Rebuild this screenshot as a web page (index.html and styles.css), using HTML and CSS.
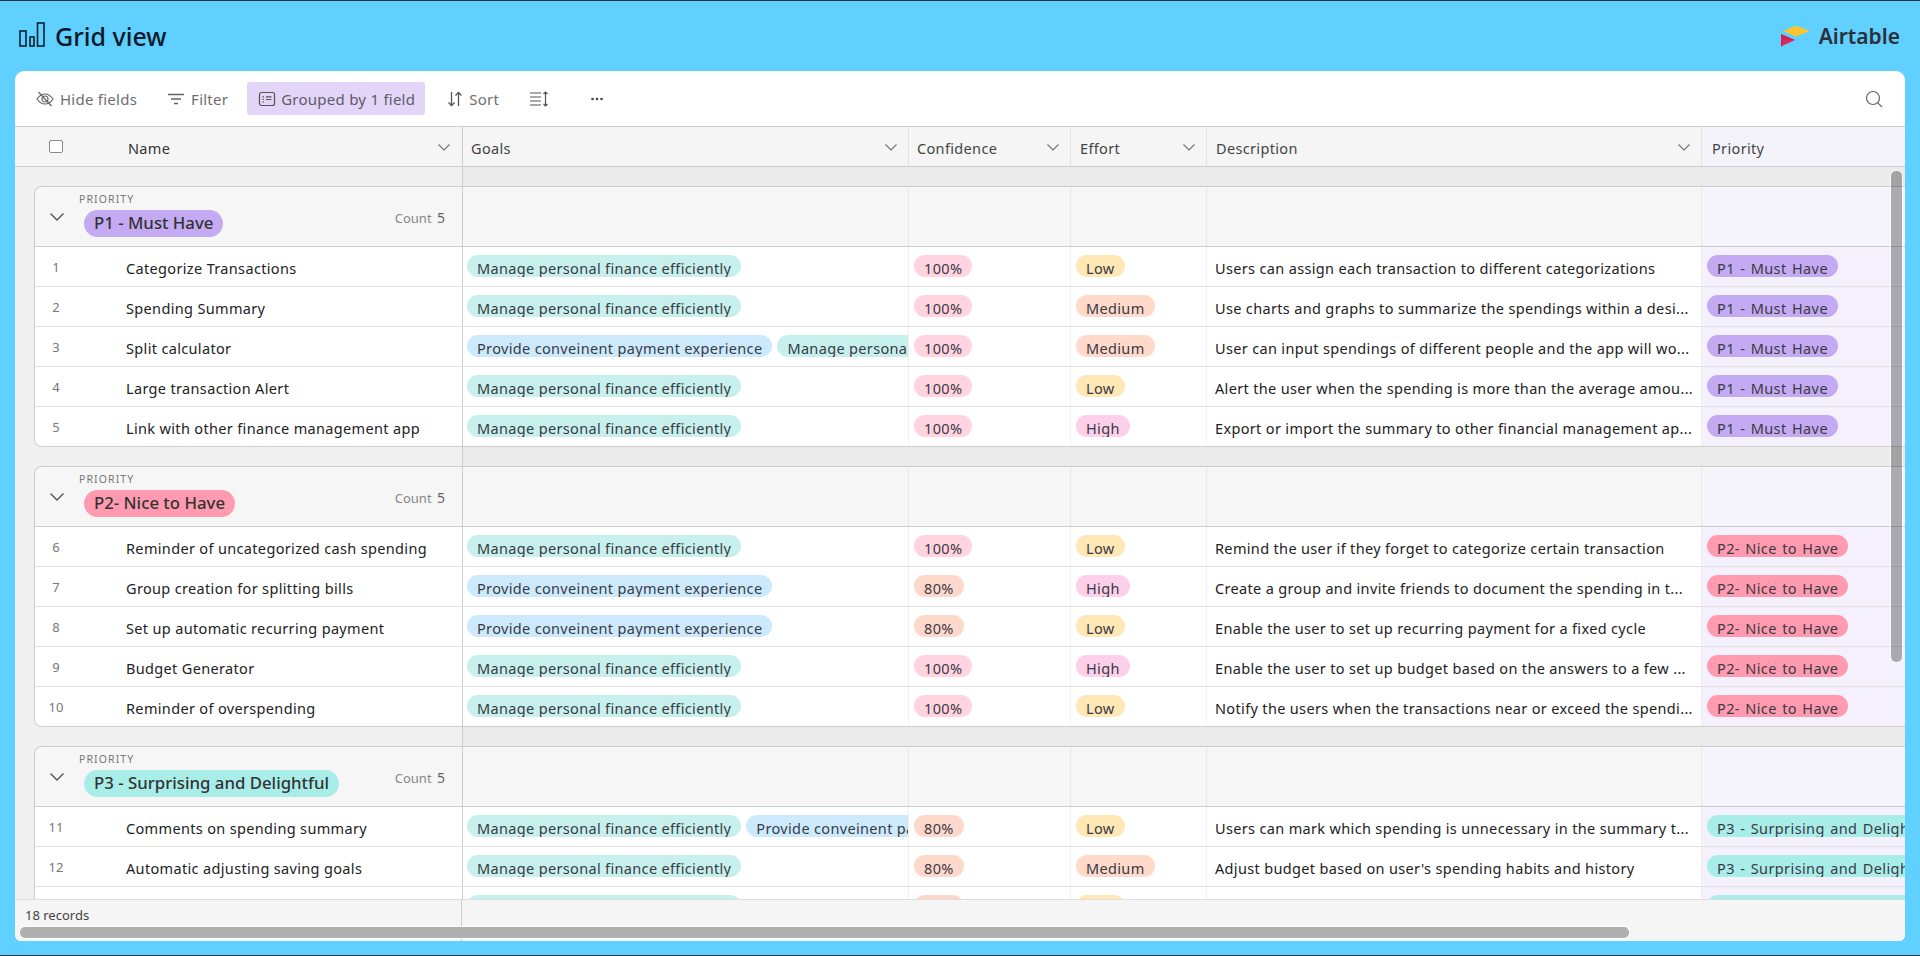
FILE: index.html
```html
<!DOCTYPE html>
<html lang="en">
<head>
<meta charset="utf-8">
<title>Grid view</title>
<link rel="stylesheet" href="styles.css">
</head>
<body>
<div class="app">
  <header class="titlebar">
    <svg class="chart-icon" width="26" height="26" viewBox="0 0 26 26" fill="none" stroke="#0b2233" stroke-width="1.6"><rect x="1" y="9" width="6" height="15"/><rect x="11" y="15" width="4" height="9"/><rect x="18.500" y="1" width="6.500" height="23"/></svg>
    <h1 class="title">Grid view</h1>
    <div class="brand">
      <svg width="30" height="21" viewBox="0 0 30 21"><path d="M2 5 13.500.3q1.500-.5 3 0L29 5 16.500 10q-1.500.5-3 0Z" fill="#fcc52f"/><path d="M0 8 14 14 0 20.500Z" fill="#e0245e"/><path d="M0 8 14 14 2.500 13.500 0 20.500Z" fill="#c01e50" opacity=".5"/></svg>
      <span class="brand-name">Airtable</span>
    </div>
  </header>
  <main class="card">
    <div class="toolbar">
      <span class="tool tool-hide"><svg width="18" height="18" viewBox="0 0 18 18" fill="none" stroke="#666" stroke-width="1.200"><path d="M1 9q3.500-5 8-5t8 5q-3.500 5-8 5t-8-5Z"/><circle cx="9" cy="9" r="3"/><path d="M2.500 2 15.500 16"/></svg>Hide fields</span>
      <span class="tool tool-filter"><svg width="18" height="18" viewBox="0 0 18 18" fill="none" stroke="#666" stroke-width="1.300"><path d="M1 4.500h16M4 9h10M7 13.500h4"/></svg>Filter</span>
      <span class="tool tool-group"><svg width="18" height="18" viewBox="0 0 18 18" fill="none" stroke="#555" stroke-width="1.200"><rect x="1.500" y="2.500" width="15" height="13" rx="2"/><path d="M4.500 6.800h1.500M8 6.800h5.500M4.500 9.500h1.500M8 9.500h5.500M4.500 12h1.500"/></svg>Grouped by 1 field</span>
      <span class="tool tool-sort"><svg width="16" height="18" viewBox="0 0 16 18" fill="none" stroke="#555" stroke-width="1.300"><path d="M4.500 2v13.500M1.500 12.500l3 3 3-3M11.500 16V2.500M8.500 5.500l3-3 3 3"/></svg>Sort</span>
      <span class="tool tool-rows"><svg width="20" height="18" viewBox="0 0 20 18" fill="none" stroke="#555" stroke-width="1.200"><path d="M1 3h11M1 7h11M1 11h11M1 15h11M16.500 2v14M14.500 4l2-2 2 2M14.500 14l2 2 2-2"/></svg></span>
      <span class="tool tool-more"><svg width="14" height="14" viewBox="0 0 14 14" fill="#444"><circle cx="2.500" cy="7" r="1.300"/><circle cx="7" cy="7" r="1.300"/><circle cx="11.500" cy="7" r="1.300"/></svg></span>
      <svg class="search" width="18" height="18" viewBox="0 0 18 18" fill="none" stroke="#666" stroke-width="1.200"><circle cx="8" cy="8" r="6.500"/><path d="M12.800 12.800 17 17"/></svg>
    </div>

    <div class="head row-head">
      <div class="hcell hcell-name"><span class="check"></span><span class="hname">Name</span><svg class="chev" width="12" height="7" viewBox="0 0 12 7" fill="none" stroke="#777" stroke-width="1.200"><path d="M.5.500 6 6 11.500.500"/></svg></div>
      <div class="hcell">Goals<svg class="chev" width="12" height="7" viewBox="0 0 12 7" fill="none" stroke="#777" stroke-width="1.200"><path d="M.5.500 6 6 11.500.500"/></svg></div>
      <div class="hcell">Confidence<svg class="chev" width="12" height="7" viewBox="0 0 12 7" fill="none" stroke="#777" stroke-width="1.200"><path d="M.5.500 6 6 11.500.500"/></svg></div>
      <div class="hcell hcell-effort">Effort<svg class="chev" width="12" height="7" viewBox="0 0 12 7" fill="none" stroke="#777" stroke-width="1.200"><path d="M.5.500 6 6 11.500.500"/></svg></div>
      <div class="hcell hcell-effort">Description<svg class="chev" width="12" height="7" viewBox="0 0 12 7" fill="none" stroke="#777" stroke-width="1.200"><path d="M.5.500 6 6 11.500.500"/></svg></div>
      <div class="hcell hcell-pri">Priority</div>
    </div>

    <div class="viewport">
      <div class="gap"><i></i><b></b></div>

      <section class="group">
        <div class="row ghead">
          <div class="gcell"><svg class="gchev" width="14" height="8" viewBox="0 0 14 8" fill="none" stroke="#555" stroke-width="1.400"><path d="M.5.500 7 7 13.500.500"/></svg><div class="gtitle"><span class="glabel">PRIORITY</span><span class="gpill p1">P1 - Must Have</span></div><span class="count">Count <em>5</em></span></div>
          <div></div><div></div><div></div><div></div><div class="pri-head"></div>
        </div>
        <div class="row"><div class="c-name"><span class="num">1</span>Categorize Transactions</div><div class="c-goal"><span class="pill gm">Manage personal finance efficiently</span></div><div class="c-tag"><span class="pill c100">100%</span></div><div class="c-tag"><span class="pill low">Low</span></div><div class="c-desc">Users can assign each transaction to different categorizations</div><div class="c-tag pri"><span class="pill p1">P1 - Must Have</span></div></div>
        <div class="row"><div class="c-name"><span class="num">2</span>Spending Summary</div><div class="c-goal"><span class="pill gm">Manage personal finance efficiently</span></div><div class="c-tag"><span class="pill c100">100%</span></div><div class="c-tag"><span class="pill med">Medium</span></div><div class="c-desc">Use charts and graphs to summarize the spendings within a desi...</div><div class="c-tag pri"><span class="pill p1">P1 - Must Have</span></div></div>
        <div class="row"><div class="c-name"><span class="num">3</span>Split calculator</div><div class="c-goal"><span class="pill gp">Provide conveinent payment experience</span><span class="pill gm">Manage personal finance efficiently</span></div><div class="c-tag"><span class="pill c100">100%</span></div><div class="c-tag"><span class="pill med">Medium</span></div><div class="c-desc">User can input spendings of different people and the app will wo...</div><div class="c-tag pri"><span class="pill p1">P1 - Must Have</span></div></div>
        <div class="row"><div class="c-name"><span class="num">4</span>Large transaction Alert</div><div class="c-goal"><span class="pill gm">Manage personal finance efficiently</span></div><div class="c-tag"><span class="pill c100">100%</span></div><div class="c-tag"><span class="pill low">Low</span></div><div class="c-desc">Alert the user when the spending is more than the average amou...</div><div class="c-tag pri"><span class="pill p1">P1 - Must Have</span></div></div>
        <div class="row"><div class="c-name"><span class="num">5</span>Link with other finance management app</div><div class="c-goal"><span class="pill gm">Manage personal finance efficiently</span></div><div class="c-tag"><span class="pill c100">100%</span></div><div class="c-tag"><span class="pill high">High</span></div><div class="c-desc">Export or import the summary to other financial management ap...</div><div class="c-tag pri"><span class="pill p1">P1 - Must Have</span></div></div>
      </section>

      <div class="gap"><i></i><b></b></div>

      <section class="group">
        <div class="row ghead">
          <div class="gcell"><svg class="gchev" width="14" height="8" viewBox="0 0 14 8" fill="none" stroke="#555" stroke-width="1.400"><path d="M.5.500 7 7 13.500.500"/></svg><div class="gtitle"><span class="glabel">PRIORITY</span><span class="gpill p2">P2- Nice to Have</span></div><span class="count">Count <em>5</em></span></div>
          <div></div><div></div><div></div><div></div><div class="pri-head"></div>
        </div>
        <div class="row"><div class="c-name"><span class="num">6</span>Reminder of uncategorized cash spending</div><div class="c-goal"><span class="pill gm">Manage personal finance efficiently</span></div><div class="c-tag"><span class="pill c100">100%</span></div><div class="c-tag"><span class="pill low">Low</span></div><div class="c-desc">Remind the user if they forget to categorize certain transaction</div><div class="c-tag pri"><span class="pill p2">P2- Nice to Have</span></div></div>
        <div class="row"><div class="c-name"><span class="num">7</span>Group creation for splitting bills</div><div class="c-goal"><span class="pill gp">Provide conveinent payment experience</span></div><div class="c-tag"><span class="pill c80">80%</span></div><div class="c-tag"><span class="pill high">High</span></div><div class="c-desc">Create a group and invite friends to document the spending in t...</div><div class="c-tag pri"><span class="pill p2">P2- Nice to Have</span></div></div>
        <div class="row"><div class="c-name"><span class="num">8</span>Set up automatic recurring payment</div><div class="c-goal"><span class="pill gp">Provide conveinent payment experience</span></div><div class="c-tag"><span class="pill c80">80%</span></div><div class="c-tag"><span class="pill low">Low</span></div><div class="c-desc">Enable the user to set up recurring payment for a fixed cycle</div><div class="c-tag pri"><span class="pill p2">P2- Nice to Have</span></div></div>
        <div class="row"><div class="c-name"><span class="num">9</span>Budget Generator</div><div class="c-goal"><span class="pill gm">Manage personal finance efficiently</span></div><div class="c-tag"><span class="pill c100">100%</span></div><div class="c-tag"><span class="pill high">High</span></div><div class="c-desc">Enable the user to set up budget based on the answers to a few ...</div><div class="c-tag pri"><span class="pill p2">P2- Nice to Have</span></div></div>
        <div class="row"><div class="c-name"><span class="num">10</span>Reminder of overspending</div><div class="c-goal"><span class="pill gm">Manage personal finance efficiently</span></div><div class="c-tag"><span class="pill c100">100%</span></div><div class="c-tag"><span class="pill low">Low</span></div><div class="c-desc">Notify the users when the transactions near or exceed the spendi...</div><div class="c-tag pri"><span class="pill p2">P2- Nice to Have</span></div></div>
      </section>

      <div class="gap"><i></i><b></b></div>

      <section class="group">
        <div class="row ghead">
          <div class="gcell"><svg class="gchev" width="14" height="8" viewBox="0 0 14 8" fill="none" stroke="#555" stroke-width="1.400"><path d="M.5.500 7 7 13.500.500"/></svg><div class="gtitle"><span class="glabel">PRIORITY</span><span class="gpill p3">P3 - Surprising and Delightful</span></div><span class="count">Count <em>5</em></span></div>
          <div></div><div></div><div></div><div></div><div class="pri-head"></div>
        </div>
        <div class="row"><div class="c-name"><span class="num">11</span>Comments on spending summary</div><div class="c-goal"><span class="pill gm">Manage personal finance efficiently</span><span class="pill gp">Provide conveinent payment experience</span></div><div class="c-tag"><span class="pill c80">80%</span></div><div class="c-tag"><span class="pill low">Low</span></div><div class="c-desc">Users can mark which spending is unnecessary in the summary t...</div><div class="c-tag pri"><span class="pill p3">P3 - Surprising and Delightful</span></div></div>
        <div class="row"><div class="c-name"><span class="num">12</span>Automatic adjusting saving goals</div><div class="c-goal"><span class="pill gm">Manage personal finance efficiently</span></div><div class="c-tag"><span class="pill c80">80%</span></div><div class="c-tag"><span class="pill med">Medium</span></div><div class="c-desc">Adjust budget based on user's spending habits and history</div><div class="c-tag pri"><span class="pill p3">P3 - Surprising and Delightful</span></div></div>
        <div class="row"><div class="c-name"></div><div class="c-goal"><span class="pill gm">Manage personal finance efficiently</span></div><div class="c-tag"><span class="pill c80">80%</span></div><div class="c-tag"><span class="pill low">Low</span></div><div class="c-desc"></div><div class="c-tag pri"><span class="pill p3">P3 - Surprising and Delightful</span></div></div>
      </section>

      <div class="vscroll"></div>
    </div>

    <footer class="footer">
      <div class="records">18 records</div>
      <div class="hscroll"></div>
    </footer>
  </main>
</div>
</body>
</html>
```

FILE: styles.css
```css
* { box-sizing: border-box; }
html, body { margin: 0; height: 100%; }
body { font-family: "Noto Sans", "Open Sans", sans-serif; font-size: 14.5px; letter-spacing: .34px; color: #222; overflow: hidden; }

.app { height: 956px; background: #5fd0ff; border-top: 1px solid #2f3341; border-bottom: 1px solid #2f3341; display: flex; flex-direction: column; }

.titlebar { height: 70px; flex: none; display: flex; align-items: center; padding: 0 20px 0 19px; }
.chart-icon { margin-top: -2px; }
.title { margin: 0 0 0 10px; font-size: 25px; font-weight: 500; letter-spacing: 0; color: #08192a; }
.brand { margin-left: auto; display: flex; align-items: center; gap: 8px; }
.brand-name { font-size: 21px; font-weight: 600; letter-spacing: 0; color: #2d2f3a; }

.card { flex: none; height: 870px; margin: 0 15px; background: #fff; border-radius: 9px 9px 6px 6px; overflow: hidden; display: flex; flex-direction: column; position: relative; }

.toolbar { height: 56px; flex: none; border-bottom: 1px solid #ccc; display: flex; align-items: center; padding: 0 22px 0 21px; color: #6e6e6e; }
.tool { display: flex; align-items: center; gap: 6px; font-size: 15px; letter-spacing: .25px; white-space: nowrap; padding-top: 1px; }
.tool svg { margin-top: -1px; }
.tool-hide { margin-right: 30px; }
.tool-filter { margin-right: 19px; }
.tool-group { height: 33px; background: #e3d5f7; border-radius: 3px; padding: 1px 10px 0 11px; gap: 5px; margin-right: 22px; color: #5c5c66; }
.tool-sort { margin-right: 30px; }
.tool-rows { margin-right: 41px; }
.search { margin-left: auto; }

.head { height: 40px; flex: none; display: grid; grid-template-columns: 448px 445px 162px 136px 495px 204px; background: #f5f5f5; border-bottom: 1px solid #ccc; }
.hcell { display: flex; align-items: center; padding: 2px 11px 0 8px; border-left: 1px solid #e2e2e2; color: #444; white-space: nowrap; }
.hcell-name + .hcell { border-left: 0; }
.hcell-effort { padding-left: 9px; }
.hcell-name { border-left: 0; padding-left: 34px; border-right: 1px solid #ccc; color: #333; padding-right: 12px; }
.hcell-pri { background: #f5f3fa; padding-left: 10px; }
.chev { margin-left: auto; margin-top: -1px; }
.check { width: 14px; height: 13px; border: 1px solid #888; border-radius: 2px; background: #fff; margin-top: -3px; }
.hname { margin-left: 65px; }

.viewport { flex: 1; min-height: 0; overflow: hidden; position: relative; background: #f0f0f0; }
.gap { height: 19px; display: grid; grid-template-columns: 448px 1fr; }
.gap i { display: block; border-right: 1px solid #ccc; background: #f0f0f0; }
.gap b { display: block; background: #ebebeb; }

.group { margin-left: 19px; border: 1px solid #ccc; border-right: 0; border-radius: 8px 0 0 8px; overflow: hidden; background: #fff; }
.row { height: 40px; display: grid; grid-template-columns: 427px 446px 162px 136px 495px 204px; border-bottom: 1px solid #e0e0e0; }
.group .row:last-child { height: 39px; border-bottom: 0; }
.row > div { overflow: hidden; white-space: nowrap; border-left: 1px solid #f0f0f0; }
.row > div:first-child { border-left: 0; }
.row > div:nth-child(2) { border-left-color: #ccc; }

.ghead { height: 60px; background: #f6f6f6; border-bottom-color: #ccc; }
.ghead > div { border-left-color: #e8e8e8; }
.gcell { display: flex; align-items: center; padding-left: 15px; padding-right: 17px; }
.gchev { flex: none; margin-top: 1px; }
.gtitle { margin-left: 15px; display: flex; flex-direction: column; align-items: flex-start; margin-top: -4px; }
.glabel { font-size: 10.5px; letter-spacing: 1.1px; color: #777; line-height: 12px; margin-bottom: 5px; }
.gpill { display: block; height: 27px; border-radius: 14px; margin-left: 5px; padding: 0 10px; font-size: 16.8px; letter-spacing: 0; line-height: 26px; font-weight: 500; color: #333; }
.count { margin-left: auto; font-size: 13px; letter-spacing: 0; color: #888; margin-top: 1px; }
.count em { font-style: normal; font-size: 14px; color: #666; margin-left: 2px; }

.num { width: 42px; flex: none; text-align: center; font-size: 13px; letter-spacing: 0; color: #777; margin: -2px 49px 0 0; }
.c-name { display: flex; align-items: center; padding-top: 2px; color: #222; }
.c-goal { display: flex; gap: 5px; padding: 8px 0 0 4px; }
.c-tag { padding: 8px 0 0 5px; }
.c-desc { padding-left: 8px; line-height: 42px; color: #222; }
.pri { background: #f4f1fd; }
.pri-head { background: #f6f4fb; }
.pri .pill { word-spacing: 1.2px; letter-spacing: .4px; }

.pill { display: block; flex: none; width: max-content; height: 22px; padding: 1px 10px 0; border-radius: 11px; overflow: hidden; line-height: 24px; color: #3a3a44; }
.gm { background: #c7f0ed; }
.gp { background: #cdeafd; }
.c100 { background: #ffd3e0; }
.c80 { background: #ffd8cc; }
.low { background: #ffe8b5; }
.med { background: #ffd9c9; }
.high { background: #fdcfe9; }
.p1 { background: #c4aaf2; }
.p2 { background: #ff9ab0; }
.p3 { background: #a8ede8; }

.vscroll { position: absolute; right: 3px; top: 4px; width: 11px; height: 491px; background: rgba(0, 0, 0, .3); border-radius: 5px; box-shadow: 0 0 0 1px rgba(255, 255, 255, .6); }

.footer { height: 42px; flex: none; background: #f5f5f5; border-top: 1px solid #ddd; position: relative; }
.records { width: 447px; height: 100%; border-right: 1px solid #ccc; padding: 7px 0 0 10px; font-size: 13px; letter-spacing: 0; color: #444; line-height: 16px; }
.hscroll { position: absolute; left: 5px; top: 27px; width: 1609px; height: 11px; background: #b0b0b0; border-radius: 5px; box-shadow: 0 0 0 1px #fff; }
```
